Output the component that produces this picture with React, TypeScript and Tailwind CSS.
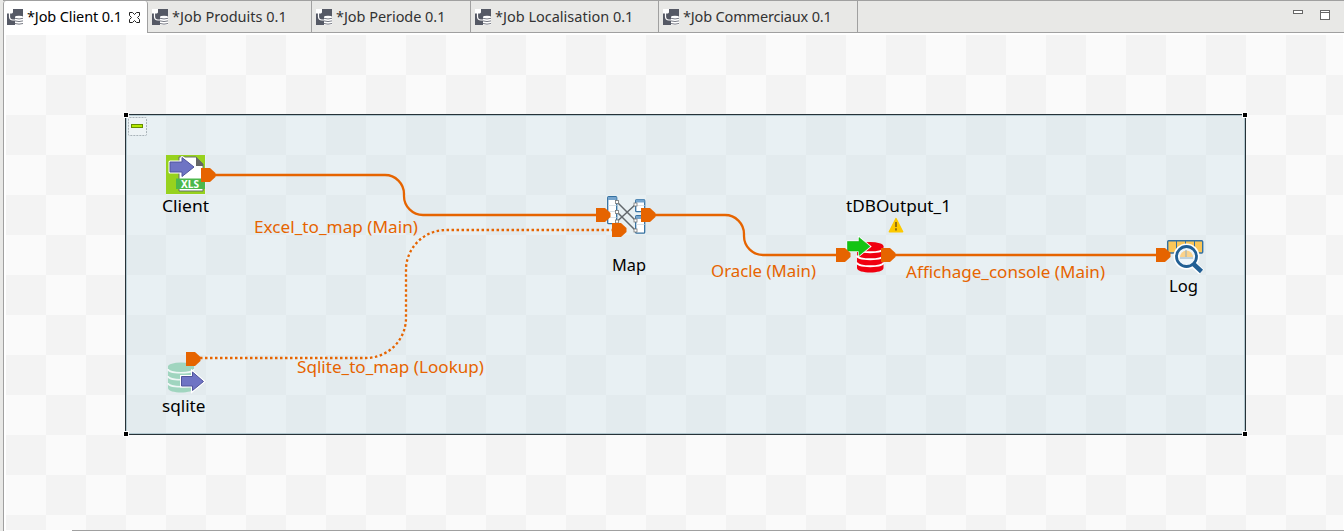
import type { ReactNode } from "react";

const tabs = [
  { label: "*Job Client 0.1", width: "w-[145px]", tracking: "tracking-[-0.12px]", active: true },
  { label: "*Job Produits 0.1", width: "w-[164px]", tracking: "tracking-normal", active: false },
  { label: "*Job Periode 0.1", width: "w-[159px]", tracking: "tracking-[-0.05px]", active: false },
  { label: "*Job Localisation 0.1", width: "w-[188px]", tracking: "tracking-normal", active: false },
  { label: "*Job Commerciaux 0.1", width: "w-[199px]", tracking: "tracking-[-0.17px]", active: false },
];

function JobIcon() {
  return (
    <svg width="16" height="16" viewBox="0 0 16 16" className="shrink-0">
      <rect width="16" height="16" fill="#555965" />
      <path d="M0 0h6v3.500l-1 1H0z" fill="#fff" />
      <path d="M2.500 4v3.500q0 3.500 3.500 3.500h2.500" fill="none" stroke="#fff" strokeWidth="1.200" />
      <path d="M8 8q0-1.200 4-1.200T16 8v8H8z" fill="#fff" />
      <path d="M8 9.300q4 1.300 8 0M8 11.900q4 1.300 8 0M8 14.500q4 1.300 8 0" fill="none" stroke="#666a75" strokeWidth="0.900" />
    </svg>
  );
}

function CloseIcon() {
  return (
    <svg width="11" height="11" viewBox="0 0 11 11" className="ml-auto shrink-0">
      <path d="M.5.5h3l2 2 2-2h3v3l-2 2 2 2v3h-3l-2-2-2 2h-3v-3l2-2-2-2z" fill="#fff" stroke="#222" />
    </svg>
  );
}

function Port({ x, y }: { x: number; y: number }) {
  return <path transform={`translate(${x} ${y})`} d="M0 0h9l5.500 5v4L9 14H0z" fill="#e66400" />;
}

function Label({ x, y, w, wire, children }: { x: number; y: number; w: number; wire?: boolean; children: ReactNode }) {
  return (
    <text x={x} y={y} textLength={w} lengthAdjust="spacingAndGlyphs" fontSize="17" fill={wire ? "#e66400" : "#000"}>
      {children}
    </text>
  );
}

function ExcelNode() {
  return (
    <g>
      <rect x="166" y="155" width="39" height="39" fill="#97d21e" />
      <path d="M179 157h17l7 7v27h-24z" fill="#fff" stroke="#667066" strokeWidth="1" />
      <path d="M196 157l7 7v2h-7z" fill="#666" />
      <rect x="176" y="178.500" width="29" height="10.500" fill="#4cb84c" />
      <text x="181" y="187.500" fontSize="10.500" fontWeight="700" textLength="18" lengthAdjust="spacingAndGlyphs" fill="#fff">XLS</text>
      <path d="M170 162h12v-4.500l12 9.500-12 9.500V172h-12z" fill="#6f74c4" stroke="#fff" strokeWidth="3" strokeLinejoin="round" />
      <path d="M170 162h12v-4.500l12 9.500-12 9.500V172h-12z" fill="#6f74c4" stroke="#50549c" strokeWidth="1" />
    </g>
  );
}

function SqliteNode() {
  return (
    <g>
      <path d="M168 366v22c0 6 26 6 26 0v-22z" fill="#a0d5bf" />
      <path d="M168 369c0 5 26 5 26 0M168 376c0 5 26 5 26 0M168 383c0 5 26 5 26 0" fill="none" stroke="#eff7f6" strokeWidth="1.600" />
      <ellipse cx="181" cy="366.500" rx="13" ry="4" fill="#a0d5bf" />
      <path d="M181.500 376.500h11v-4.500l11 9.500-11 9v-4.500h-11z" fill="#6f74c4" stroke="#fff" strokeWidth="3" />
      <path d="M181.500 376.500h11v-4.500l11 9.500-11 9v-4.500h-11z" fill="#6f74c4" stroke="#50549c" />
    </g>
  );
}

function MapNode() {
  return (
    <g>
      <g fill="#fff" stroke="#3470a0" strokeWidth="1.300">
        <rect x="607.700" y="196.700" width="9" height="27" rx="1" />
        <rect x="635.700" y="199.700" width="9" height="12" rx="1" />
        <rect x="635.700" y="215.700" width="9" height="17.500" rx="1" />
      </g>
      <path d="M608 198.500h8.500M636 201h8.500M636 217.500h8.500" stroke="#77a5cd" strokeWidth="3" />
      <path d="M608.500 205.500h8M608.500 211.500h8M608.500 217.500h8M636.500 205.500h8M636.500 224.500h8" stroke="#dce2e6" />
      <path d="M617 202l18.500 18.500M617 212l18.500 18.500M617 221.500l18.500-17" stroke="#63686d" strokeWidth="1.500" />
      <g fill="#fff" stroke="#777" strokeWidth="0.800">
        <rect x="615.500" y="200.500" width="3" height="3" />
        <rect x="615.500" y="210.500" width="3" height="3" />
        <rect x="615.500" y="220" width="3" height="3" />
        <rect x="634" y="203" width="3" height="3" />
        <rect x="634" y="219" width="3" height="3" />
        <rect x="634" y="229" width="3" height="3" />
      </g>
    </g>
  );
}

function OutputNode() {
  return (
    <g>
      <path d="M857 246v22c0 6 26.500 6 26.500 0v-22z" fill="#f00010" />
      <path d="M857 248.500c0 5 26.500 5 26.500 0M857 255.500c0 5 26.500 5 26.500 0M857 262.500c0 5 26.500 5 26.500 0" fill="none" stroke="#fff" strokeWidth="1.800" />
      <ellipse cx="870.200" cy="246" rx="13.200" ry="4" fill="#f00010" />
      <path d="M847.500 241.500h11.500v-4l11 9-11 9v-4.500h-11.500z" fill="#13c413" stroke="#fff" strokeWidth="2.200" />
      <path d="M847.500 241.500h11.500v-4l11 9-11 9v-4.500h-11.500z" fill="#13c413" stroke="#10b010" strokeWidth="0.600" />
      <path d="M896 218.500l6.700 13.200h-13.400z" fill="#fcc900" stroke="#fcc900" strokeWidth="1.400" strokeLinejoin="round" />
      <path d="M896 222v5M896 228.300v2.200" stroke="#8c6a10" strokeWidth="1.800" />
    </g>
  );
}

function LogNode() {
  return (
    <g>
      <rect x="1167.700" y="240.700" width="35" height="12.300" rx="1" fill="#fbc657" stroke="#3470a0" strokeWidth="1.400" />
      <path d="M1176.500 241v12M1185.500 241v12M1194.500 241v12" stroke="#3470a0" />
      <path d="M1193 264l8.500 8" stroke="#fff" strokeWidth="7" />
      <circle cx="1186.500" cy="256.500" r="10.500" fill="#edf5fa" stroke="#fff" strokeWidth="5" />
      <path d="M1180 257a6.500 6.500 0 0 1 13 0z" fill="#fbd28a" />
      <path d="M1186 250v7M1180 258h13" stroke="#8eacbe" />
      <circle cx="1186.500" cy="256.500" r="10" fill="none" stroke="#215f94" strokeWidth="2.800" />
      <path d="M1193.500 264l8 7.500" stroke="#215f94" strokeWidth="4.500" />
    </g>
  );
}

function Diagram() {
  return (
    <svg width="1338" height="495" viewBox="6 35 1338 495" className="block font-['Noto_Sans',sans-serif]">
      <rect x="125" y="114" width="1121" height="321" fill="#b2d2de" fillOpacity="0.250" />
      <rect x="126.500" y="115.500" width="1118" height="318" fill="none" stroke="#b3c8d0" />
      <rect x="125.500" y="114.500" width="1120" height="320" fill="none" stroke="#263238" />
      <g fill="#000" stroke="#fff">
        <rect x="123.500" y="112.500" width="5" height="5" />
        <rect x="1242.500" y="112.500" width="5" height="5" />
        <rect x="123.500" y="431.500" width="5" height="5" />
        <rect x="1242.500" y="431.500" width="5" height="5" />
      </g>
      <rect x="128.500" y="117.500" width="18" height="18" rx="1" fill="#edf3f5" stroke="#a8b2b8" strokeDasharray="2 1" />
      <rect x="131.500" y="124.500" width="11" height="3" fill="#b4e900" stroke="#658e00" />

      <ExcelNode />
      <SqliteNode />
      <MapNode />
      <OutputNode />
      <LogNode />

      <g fill="none" stroke="#e66400" strokeWidth="2.300">
        <path d="M214 175H385A19 19 0 0 1 404 194V196A19 19 0 0 0 423 215H598" />
        <path d="M654 215H725A19 19 0 0 1 744 234V236A19 19 0 0 0 763 255H838" />
        <path d="M893 255H1158" />
        <path d="M200 358H366A40 40 0 0 0 406 318V270A40 40 0 0 1 446 230H614" strokeDasharray="2.500 2.500" />
      </g>
      <Port x={201} y={168} />
      <Port x={186} y={352} />
      <Port x={596} y={208} />
      <Port x={612} y={223} />
      <Port x={641} y={208} />
      <Port x={836} y={248} />
      <Port x={881} y={248} />
      <Port x={1156} y={248} />

      <Label x={162} y={212} w={47}>Client</Label>
      <Label x={162} y={412} w={43.500}>sqlite</Label>
      <Label x={612} y={271} w={34}>Map</Label>
      <Label x={846} y={212} w={105}>tDBOutput_1</Label>
      <Label x={1169} y={292} w={29}>Log</Label>
      <Label x={254} y={233} w={164} wire>Excel_to_map (Main)</Label>
      <Label x={297} y={373} w={187} wire>Sqlite_to_map (Lookup)</Label>
      <Label x={711} y={277} w={105} wire>Oracle (Main)</Label>
      <Label x={906} y={278} w={199} wire>Affichage_console (Main)</Label>
    </svg>
  );
}

export default function App() {
  return (
    <div className="flex h-[531px] w-[1344px] flex-col overflow-hidden bg-[#e8e8e6] pl-[3px] font-['Noto_Sans',sans-serif]">
      <header className="flex h-[33px] shrink-0 border-t border-[#a0a0a0]">
        {tabs.map((tab) => (
          <div
            key={tab.label}
            className={`flex shrink-0 items-center border-r border-[#a0a0a0] pr-[7px] ${tab.width} ${
              tab.active ? "rounded-t-[3px] border-l bg-white pl-[3px] text-black" : "border-b pl-[4px] text-[#333]"
            }`}
          >
            <JobIcon />
            <span className={`ml-[4px] pb-[2px] text-[14.5px] leading-[20px] whitespace-nowrap ${tab.tracking}`}>{tab.label}</span>
            {tab.active && <CloseIcon />}
          </div>
        ))}
        <div className="flex flex-1 items-start justify-end gap-[17px] border-b border-[#a0a0a0] pt-[9px] pr-[14px]">
          <div className="h-[4px] w-[10px] border border-[#666] bg-white" />
          <div className="h-[10px] w-[10px] border border-[#666] bg-white pt-[1px]">
            <div className="h-px bg-[#666]" />
          </div>
        </div>
      </header>
      <main className="flex-1 border-l border-[#a0a0a0] bg-white pt-[2px] pl-[2px]">
        <div className="h-[495px] w-[1337px] overflow-hidden bg-[conic-gradient(#fafafa_25%,#f3f3f3_0_50%,#fafafa_0_75%,#f3f3f3_0)] bg-[size:80px_80px]">
          <Diagram />
        </div>
        <div className="ml-[66px] h-px bg-[#a0a0a0]" />
      </main>
    </div>
  );
}
